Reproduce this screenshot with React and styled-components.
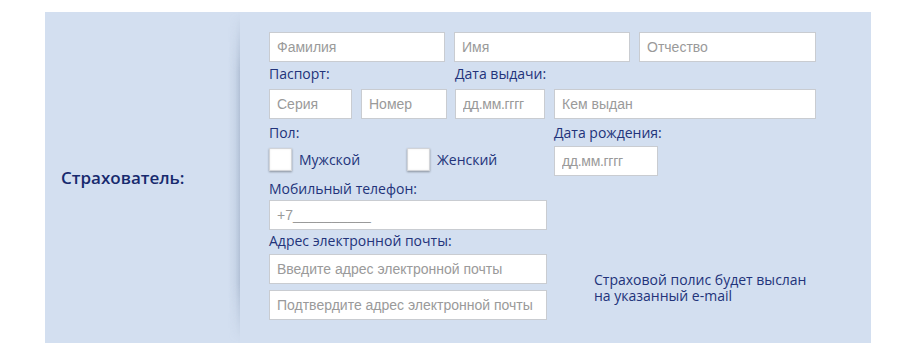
import React from 'react';
import styled, { createGlobalStyle } from 'styled-components';

const Global = createGlobalStyle`
  html, body { margin: 0; padding: 0; background: #ffffff; }
  body { font-family: "Open Sans", "Noto Sans", sans-serif; }
  * { box-sizing: border-box; }
`;

const Page = styled.div`
  padding: 12px 0 0 45px;
`;

const Panel = styled.section`
  width: 826px;
  height: 331px;
  background: #d3dff0;
  display: flex;
`;

const Side = styled.div`
  width: 183px;
  display: flex;
  align-items: center;
  padding: 0 0 0 16px;
`;

const SideTitle = styled.h2`
  margin: 0;
  font-size: 17px;
  font-weight: 600;
  color: #172a6e;
  letter-spacing: 0;
`;

const Divider = styled.div`
  width: 12px;
  background: linear-gradient(to right, rgba(120, 140, 170, 0) 0%, rgba(120, 140, 170, 0.12) 60%, rgba(110, 130, 160, 0.32) 100%);
  -webkit-mask-image: linear-gradient(to bottom, transparent 0%, #000 18%, #000 82%, transparent 100%);
  mask-image: linear-gradient(to bottom, transparent 0%, #000 18%, #000 82%, transparent 100%);
`;

const Form = styled.div`
  flex: 1;
  display: flex;
  flex-direction: column;
  padding: 20px 0 0 29px;
`;

const Row = styled.div`
  display: flex;
  gap: ${p => p.$gap ?? 9}px;
`;

const Group = styled.div`
  display: flex;
  flex-direction: column;
  width: ${p => (p.$w ? `${p.$w}px` : 'auto')};
`;

const Label = styled.div`
  font-size: 14px;
  line-height: 20px;
  color: #22337a;
  margin-top: ${p => p.$mt ?? 2}px;
  margin-bottom: ${p => p.$mb ?? 5}px;
  white-space: nowrap;
`;

const Field = styled.input`
  width: ${p => p.$w}px;
  height: 30px;
  margin: 0;
  padding: 0 7px;
  border: 1px solid #c9ccd1;
  background: #ffffff;
  border-radius: 0;
  font-family: "Liberation Sans", Arial, sans-serif;
  font-size: 14px;
  color: #333;
  outline: none;
  &::placeholder {
    color: #9a9a9a;
    opacity: 1;
    letter-spacing: ${p => (p.$tight ? '-0.3px' : '0')};
  }
`;

const Options = styled.div`
  display: flex;
  align-items: center;
  height: 33px;
`;

const Option = styled.label`
  display: flex;
  align-items: center;
  width: ${p => (p.$w ? `${p.$w}px` : 'auto')};
  font-size: 14px;
  color: #22337a;
  cursor: pointer;
`;

const Box = styled.span`
  width: 23px;
  height: 23px;
  margin-right: 7px;
  background: #ffffff;
  border: 1px solid #d2d4d8;
  box-shadow: 0 1px 2px rgba(0, 0, 0, 0.35), inset 0 0 2px rgba(0, 0, 0, 0.08);
`;

const EmailArea = styled.div`
  display: flex;
`;

const Note = styled.p`
  margin: 42px 0 0 47px;
  font-size: 14px;
  line-height: 16px;
  color: #22337a;
`;

export default function App() {
  return (
    <>
      <Global />
      <Page>
        <Panel>
          <Side>
            <SideTitle>Страхователь:</SideTitle>
          </Side>
          <Divider />
          <Form>
            <Row>
              <Field $w={176} placeholder="Фамилия" />
              <Field $w={176} placeholder="Имя" />
              <Field $w={177} placeholder="Отчество" />
            </Row>

            <Row $gap={0}>
              <Group $w={186}>
                <Label>Паспорт:</Label>
                <Row>
                  <Field $w={83} placeholder="Серия" />
                  <Field $w={86} placeholder="Номер" />
                </Row>
              </Group>
              <Group>
                <Label $mt={2}>Дата выдачи:</Label>
                <Row>
                  <Field $w={90} $tight placeholder="дд.мм.гггг" />
                  <Field $w={262} placeholder="Кем выдан" />
                </Row>
              </Group>
            </Row>

            <Row $gap={0}>
              <Group $w={285}>
                <Label $mt={4} $mb={0}>Пол:</Label>
                <Options>
                  <Option $w={138}>
                    <Box />
                    Мужской
                  </Option>
                  <Option>
                    <Box />
                    Женский
                  </Option>
                </Options>
              </Group>
              <Group>
                <Label $mt={4} $mb={3}>Дата рождения:</Label>
                <Field $w={104} $tight placeholder="дд.мм.гггг" />
              </Group>
            </Row>

            <Label $mt={3} $mb={1}>Мобильный телефон:</Label>
            <Field $w={278} placeholder="+7__________" />

            <EmailArea>
              <Group>
                <Label $mt={1} $mb={3}>Адрес электронной почты:</Label>
                <Field $w={278} placeholder="Введите адрес электронной почты" />
                <Field $w={278} placeholder="Подтвердите адрес электронной почты" style={{ marginTop: 6 }} />
              </Group>
              <Note>
                Страховой полис будет выслан
                <br />
                на указанный e-mail
              </Note>
            </EmailArea>
          </Form>
        </Panel>
      </Page>
    </>
  );
}
